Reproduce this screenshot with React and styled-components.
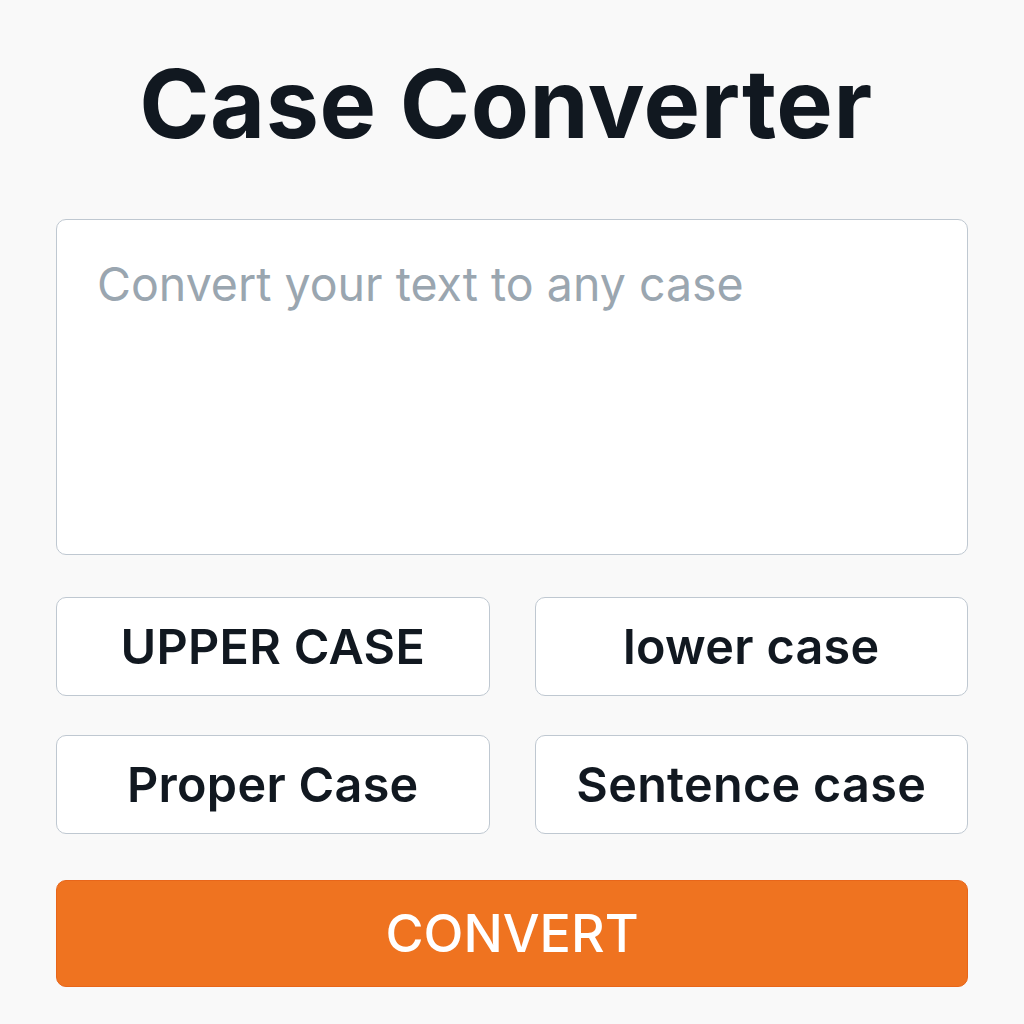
import React from 'react';
import styled, { createGlobalStyle } from 'styled-components';

const GlobalStyle = createGlobalStyle`
  body {
    margin: 0;
    background: #f9f9f9;
    font-family: Inter, "Noto Sans", sans-serif;
  }
  * { box-sizing: border-box; }
`;

const Page = styled.main`
  width: 1024px;
  height: 1024px;
  padding: 48px 56px 0;
  display: flex;
  flex-direction: column;
`;

const Title = styled.h1`
  margin: 0 0 0 -12px;
  text-align: center;
  font-size: 95px;
  font-weight: 700;
  line-height: 112px;
  color: #111820;
  letter-spacing: 0.6px;
`;

const TextBox = styled.textarea`
  margin-top: 59px;
  height: 336px;
  width: 100%;
  resize: none;
  background: #fff;
  border: 1.5px solid #bfc8d1;
  border-radius: 10px;
  padding: 36px 40px;
  font-family: inherit;
  font-size: 46.5px;
  color: #111820;
  outline: none;

  &::placeholder {
    color: #9aa6b0;
  }
`;

const Grid = styled.div`
  margin-top: 42px;
  display: grid;
  grid-template-columns: 1fr 1fr;
  column-gap: 45px;
  row-gap: 39px;
`;

const CaseButton = styled.button`
  height: 99px;
  background: #fff;
  border: 1.5px solid #bfc8d1;
  border-radius: 10px;
  font-family: inherit;
  font-size: 48.5px;
  font-weight: 600;
  letter-spacing: 0.3px;
  color: #111820;
  cursor: pointer;
`;

const ConvertButton = styled.button`
  margin-top: 46px;
  height: 107px;
  width: 100%;
  background: #ef7320;
  border: 1px solid #e8661a;
  border-radius: 10px;
  font-family: inherit;
  font-size: 52px;
  font-weight: 500;
  color: #fff;
  cursor: pointer;
`;

const cases = ['UPPER CASE', 'lower case', 'Proper Case', 'Sentence case'];

export default function App() {
  return (
    <>
      <GlobalStyle />
      <Page>
        <Title>Case Converter</Title>
        <TextBox placeholder="Convert your text to any case" />
        <Grid>
          {cases.map((c) => (
            <CaseButton key={c}>{c}</CaseButton>
          ))}
        </Grid>
        <ConvertButton>CONVERT</ConvertButton>
      </Page>
    </>
  );
}
